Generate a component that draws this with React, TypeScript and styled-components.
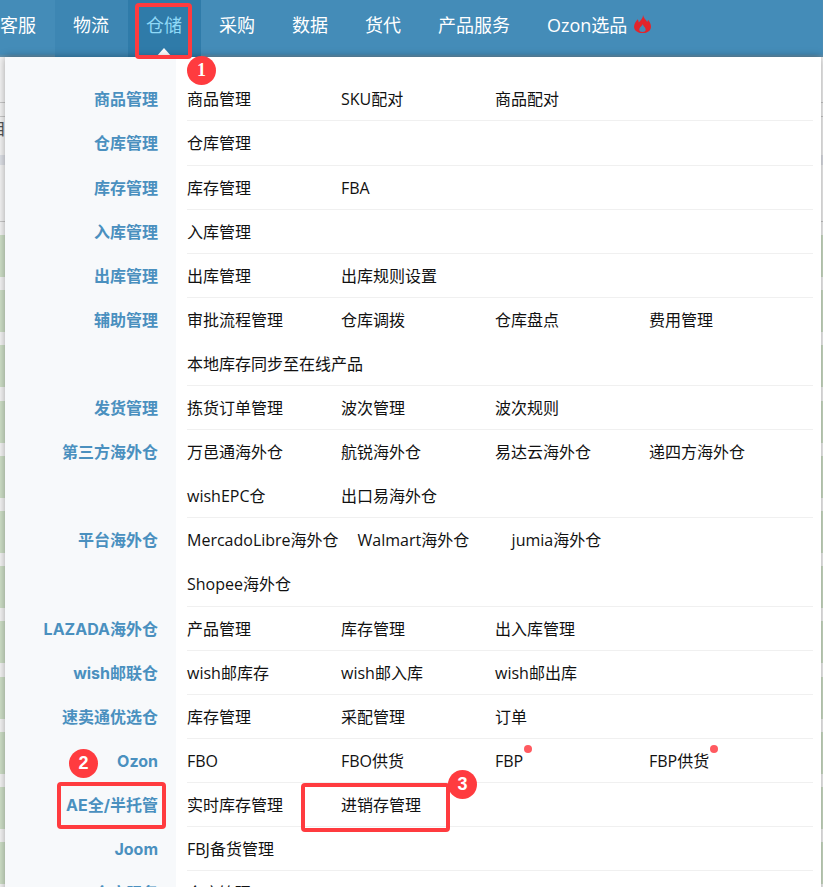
import React from "react";
import styled, { createGlobalStyle } from "styled-components";

const GlobalStyle = createGlobalStyle`
    html, body {
        margin : 0;
        padding : 0;
        background : #f5f5f5;
    }
    body {
        font-family : "Open Sans", "Noto Sans CJK SC", sans-serif;
    }
`

const PageStyled = styled.div`
    position : relative;
    width : 823px;
    height : 887px;
    overflow : hidden;
`

const NavStyled = styled.div`
    display : flex;
    height : 57px;
    margin-left : -18.5px;
    background : #448cb8;
    box-shadow : inset 0 -2px 2px rgba(150, 150, 150, 0.35);
`

const NavItemStyled = styled.div<{ $active?: boolean; $hover?: boolean }>`
    position : relative;
    display : flex;
    align-items : center;
    gap : 7px;
    height : 47px;
    padding : 0 18.5px 10px;
    font-size : 18px;
    color : ${(props) => (props.$active ? "#8fd9f7" : "#ffffff")};
    background : ${(props) => (props.$active ? "#2f7ba9" : props.$hover ? "#3d86b3" : "transparent")};
`

const NavArrowStyled = styled.span`
    position : absolute;
    left : 50%;
    bottom : 0;
    margin-left : -8px;
    border-left : 8px solid transparent;
    border-right : 8px solid transparent;
    border-bottom : 9px solid #ffffff;
`

const FlameStyled = styled.svg`
    flex : none;
    width : 17px;
    height : 18px;
    fill : #e3242b;
`

const StageStyled = styled.div`
    position : relative;
`

const BackdropTopStyled = styled.div`
    box-sizing : border-box;
    height : 178px;
    padding-top : 45px;
    background : #f5f5f5;
`

const BackdropLineStyled = styled.div<{ $gap: number }>`
    height : 1px;
    margin-bottom : ${(props) => props.$gap}px;
    background : #c9c9c9;
`

const BackdropBandStyled = styled.div`
    height : 10px;
    margin : 14px 0 56px;
    background : #dfe2e8;
`

const BackdropTextStyled = styled.div`
    height : 24px;
    margin-left : -10px;
    font-size : 16px;
    line-height : 24px;
    color : #555555;
`

const BackdropRowStyled = styled.div`
    height : 42px;
    margin-bottom : 13.2px;
    background : #cfe0c8;
`

const MenuStyled = styled.div`
    position : absolute;
    top : 0;
    left : 5px;
    right : 2px;
    padding : 20.4px 8px 0 0;
    height : 900px;
    background : linear-gradient(to right, #f7f9fb 171px, #ffffff 171px);
    box-shadow : 0 0 8px rgba(0, 0, 0, 0.35);
`

const MenuRowStyled = styled.div`
    display : flex;
`

const MenuTitleStyled = styled.div`
    flex : 0 0 171px;
    box-sizing : border-box;
    padding-right : 18px;
    height : 44.1px;
    font-family : Inter, "Noto Sans CJK SC", sans-serif;
    font-size : 16px;
    font-weight : 700;
    line-height : 44.1px;
    text-align : right;
    color : #4a90bf;
`

const MenuLinksStyled = styled.div`
    display : flex;
    flex-wrap : wrap;
    width : 626px;
    margin-left : 11px;
    box-shadow : inset 0 -1px 0 #f0f0f0;
`

const MenuLinkStyled = styled.div`
    box-sizing : border-box;
    min-width : 154px;
    height : 44.1px;
    padding-right : 19px;
    font-size : 16px;
    line-height : 44.1px;
    color : #111111;
`

const LinkLabelStyled = styled.span`
    position : relative;
    display : inline-block;
`

const DotStyled = styled.span`
    position : absolute;
    top : 6px;
    right : -9px;
    width : 8px;
    height : 8px;
    border-radius : 50%;
    background : #ff5a60;
`

const MarkBoxStyled = styled.div<{ $x: number; $y: number; $w: number; $h: number }>`
    position : absolute;
    left : ${(props) => props.$x}px;
    top : ${(props) => props.$y}px;
    width : ${(props) => props.$w}px;
    height : ${(props) => props.$h}px;
    box-sizing : border-box;
    border : 4px solid #ff3b3f;
    border-radius : 4px;
`

const MarkNumberStyled = styled.div<{ $x: number; $y: number; $serif?: boolean }>`
    position : absolute;
    left : ${(props) => props.$x}px;
    top : ${(props) => props.$y}px;
    width : 29px;
    height : 29px;
    border-radius : 50%;
    background : #ff3b3f;
    font-family : ${(props) => (props.$serif ? '"Liberation Serif", serif' : '"Liberation Sans", sans-serif')};
    font-size : 18px;
    font-weight : 700;
    line-height : 29px;
    text-align : center;
    color : #ffffff;
`

const NAV_ITEMS = ["客服", "物流", "仓储", "采购", "数据", "货代", "产品服务"];

interface MenuGroup {
    title : string;
    links : string[];
    dots? : string[];
}

const MENU_GROUPS : MenuGroup[] = [
    { title : "商品管理", links : ["商品管理", "SKU配对", "商品配对"] },
    { title : "仓库管理", links : ["仓库管理"] },
    { title : "库存管理", links : ["库存管理", "FBA"] },
    { title : "入库管理", links : ["入库管理"] },
    { title : "出库管理", links : ["出库管理", "出库规则设置"] },
    { title : "辅助管理", links : ["审批流程管理", "仓库调拨", "仓库盘点", "费用管理", "本地库存同步至在线产品"] },
    { title : "发货管理", links : ["拣货订单管理", "波次管理", "波次规则"] },
    { title : "第三方海外仓", links : ["万邑通海外仓", "航锐海外仓", "易达云海外仓", "递四方海外仓", "wishEPC仓", "出口易海外仓"] },
    { title : "平台海外仓", links : ["MercadoLibre海外仓", "Walmart海外仓", "jumia海外仓", "Shopee海外仓"] },
    { title : "LAZADA海外仓", links : ["产品管理", "库存管理", "出入库管理"] },
    { title : "wish邮联仓", links : ["wish邮库存", "wish邮入库", "wish邮出库"] },
    { title : "速卖通优选仓", links : ["库存管理", "采配管理", "订单"] },
    { title : "Ozon", links : ["FBO", "FBO供货", "FBP", "FBP供货"], dots : ["FBP", "FBP供货"] },
    { title : "AE全/半托管", links : ["实时库存管理", "进销存管理"] },
    { title : "Joom", links : ["FBJ备货管理"] },
    { title : "仓库服务", links : ["仓库管理"] },
];

const App = () => {
    const backdropRows = Array.from({ length: 12 });

    return (
        <PageStyled>
            <GlobalStyle />
            <NavStyled>
                {NAV_ITEMS.map((name, index) => (
                    <NavItemStyled key={name} $active={index === 2} $hover={index === 1}>
                        {name}
                        {index === 2 && <NavArrowStyled />}
                    </NavItemStyled>
                ))}
                <NavItemStyled>
                    Ozon选品
                    <FlameStyled viewBox="0 0 16 17">
                        <path
                            fillRule="evenodd"
                            d="M8.5 0C9 3 11 4.5 12.5 6.5C13 5.8 13.2 5 13.2 4.5C15 6.5 16 9 16 11C16 14.5 13 17 8 17C3.5 17 0 14.5 0 11C0 8 2 6 3.5 4C4 5 4.3 6 4.5 7C6.5 5 8.5 3 8.5 0ZM8.2 8.5C7.8 10.5 5 11.5 5 14C5 15.5 6.3 16 8 16C9.7 16 11 15.5 11 14C11 11.5 8.5 10.5 8.2 8.5Z"
                        />
                    </FlameStyled>
                </NavItemStyled>
            </NavStyled>
            <StageStyled>
                <BackdropTopStyled>
                    <BackdropLineStyled $gap={13} />
                    <BackdropLineStyled $gap={0} />
                    <BackdropTextStyled>目</BackdropTextStyled>
                    <BackdropBandStyled />
                    <BackdropLineStyled $gap={0} />
                </BackdropTopStyled>
                {backdropRows.map((_, index) => (
                    <BackdropRowStyled key={index} />
                ))}
                <MenuStyled>
                    {MENU_GROUPS.map((group) => (
                        <MenuRowStyled key={group.title}>
                            <MenuTitleStyled>{group.title}</MenuTitleStyled>
                            <MenuLinksStyled>
                                {group.links.map((link) => (
                                    <MenuLinkStyled key={link}>
                                        <LinkLabelStyled>
                                            {link}
                                            {group.dots?.includes(link) && <DotStyled />}
                                        </LinkLabelStyled>
                                    </MenuLinkStyled>
                                ))}
                            </MenuLinksStyled>
                        </MenuRowStyled>
                    ))}
                </MenuStyled>
            </StageStyled>
            <MarkBoxStyled $x={135} $y={3} $w={57} $h={56} />
            <MarkNumberStyled $x={187} $y={56} $serif>1</MarkNumberStyled>
            <MarkBoxStyled $x={57} $y={782} $w={109} $h={47} />
            <MarkNumberStyled $x={69} $y={749}>2</MarkNumberStyled>
            <MarkBoxStyled $x={301} $y={783} $w={149} $h={49} />
            <MarkNumberStyled $x={448} $y={770}>3</MarkNumberStyled>
        </PageStyled>
    );
};

export default App;
